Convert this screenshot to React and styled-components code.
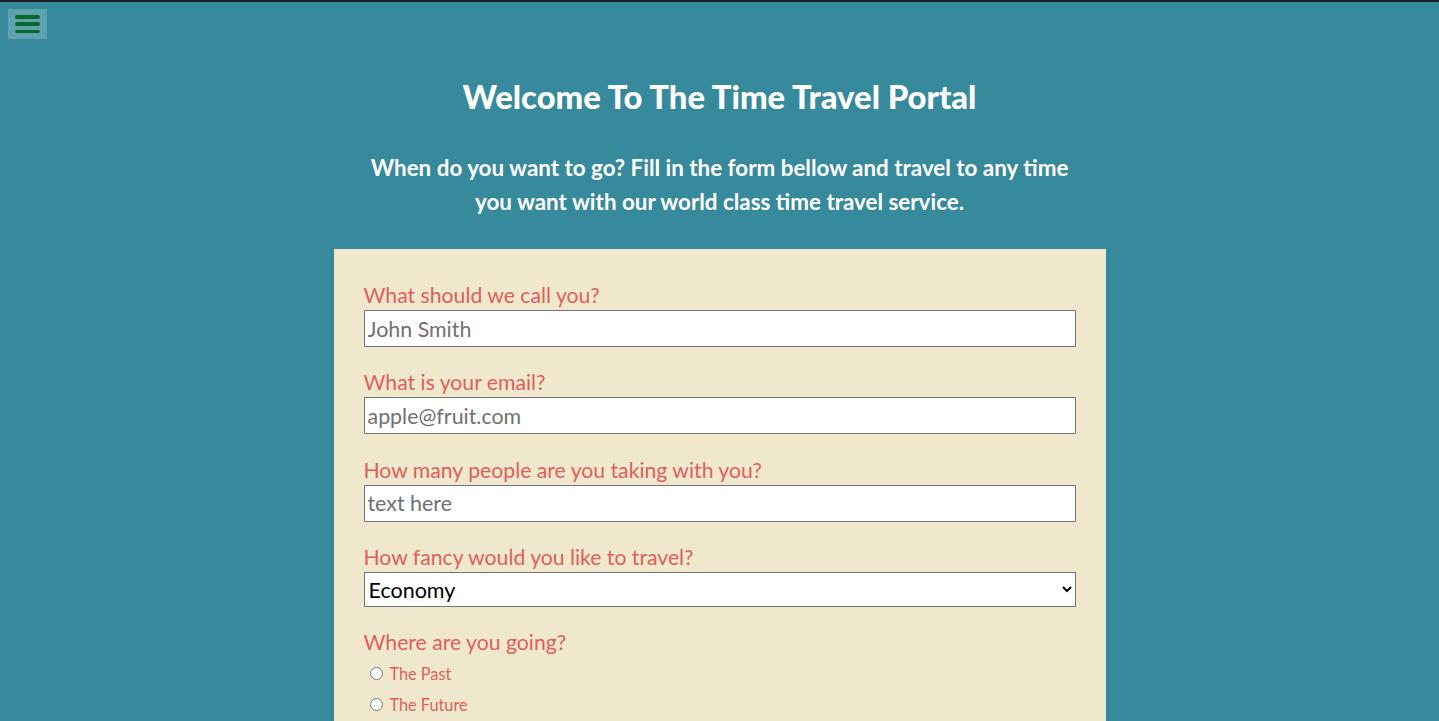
import React from "react";
import styled, { createGlobalStyle } from "styled-components";

const Global = createGlobalStyle`
  html, body { margin: 0; padding: 0; background: #378a9b; }
  body { font-family: "Lato", "Open Sans", sans-serif; border-top: 2px solid #202124; }
  * { box-sizing: border-box; }
`;

const Page = styled.div`
  position: relative;
  padding: 75px 0 0;
  min-height: 1234px;
`;

const MenuButton = styled.button`
  position: absolute;
  top: 7px;
  left: 8px;
  width: 39px;
  height: 30px;
  border: none;
  padding: 6px 7px;
  background: rgba(255, 255, 255, 0.2);
  display: flex;
  flex-direction: column;
  justify-content: space-between;
  cursor: pointer;
`;

const Bar = styled.span`
  display: block;
  height: 3.5px;
  border-radius: 2px;
  background: #096a28;
`;

const Title = styled.h1`
  margin: 0;
  text-align: center;
  color: #fff;
  font-size: 32.8px;
  line-height: 40px;
  font-weight: 900;
`;

const Intro = styled.p`
  margin: 34px auto 30px;
  max-width: 720px;
  text-align: center;
  color: #fff;
  font-size: 22.4px;
  line-height: 34px;
  font-weight: 700;
`;

const Card = styled.form`
  width: 772px;
  margin: 0 auto;
  background: #f0e8cc;
  padding: 31px 30px 60px;
  display: flex;
  flex-direction: column;
`;

const Group = styled.div`
  display: flex;
  flex-direction: column;
  margin-bottom: ${(p) => p.$gap || 20.4}px;
`;

const Label = styled.label`
  color: #df5f5c;
  font-size: 21.2px;
  line-height: 30px;
`;

const TextInput = styled.input`
  width: 100%;
  height: 37px;
  border: 1px solid #767676;
  padding: 0 3px;
  font-family: inherit;
  font-size: 21.4px;
  background: #fff;
  &::placeholder { color: #707070; }
`;

const Select = styled.select`
  width: 100%;
  height: 35px;
  border: 1px solid #767676;
  border-radius: 0;
  padding: 0;
  font-family: inherit;
  font-size: 21.5px;
  color: #000;
  background: #fff;
`;

const RadioList = styled.div`
  display: flex;
  flex-direction: column;
  margin-top: 1px;
`;

const RadioRow = styled.label`
  display: flex;
  align-items: center;
  height: 31px;
  color: #df5f5c;
  font-size: 16.3px;
  gap: 7px;
  input { margin: 0 0 0 6px; width: 13px; height: 13px; }
`;

const TextArea = styled.textarea`
  width: 100%;
  height: 120px;
  border: 1px solid #767676;
  font-family: inherit;
  font-size: 20px;
  padding: 3px;
`;

const Submit = styled.button`
  align-self: flex-start;
  padding: 10px 24px;
  font-family: inherit;
  font-size: 20px;
  font-weight: 700;
  color: #fff;
  background: #df5f5c;
  border: none;
`;

export default function App() {
  return (
    <>
      <Global />
      <Page>
        <MenuButton type="button" aria-label="menu">
          <Bar />
          <Bar />
          <Bar />
        </MenuButton>
        <Title>Welcome To The Time Travel Portal</Title>
        <Intro>
          When do you want to go? Fill in the form bellow and travel to any time
          you want with our world class time travel service.
        </Intro>
        <Card onSubmit={(e) => e.preventDefault()}>
          <Group>
            <Label>What should we call you?</Label>
            <TextInput placeholder="John Smith" />
          </Group>
          <Group>
            <Label>What is your email?</Label>
            <TextInput placeholder="apple@fruit.com" />
          </Group>
          <Group>
            <Label>How many people are you taking with you?</Label>
            <TextInput placeholder="text here" />
          </Group>
          <Group $gap={20}>
            <Label>How fancy would you like to travel?</Label>
            <Select defaultValue="economy">
              <option value="economy">Economy</option>
              <option value="business">Business</option>
              <option value="first">First Class</option>
            </Select>
          </Group>
          <Group $gap={20}>
            <Label>Where are you going?</Label>
            <RadioList>
              <RadioRow>
                <input type="radio" name="when" /> The Past
              </RadioRow>
              <RadioRow>
                <input type="radio" name="when" /> The Future
              </RadioRow>
            </RadioList>
          </Group>
          <Group>
            <Label>What year would you like to visit?</Label>
            <TextInput placeholder="1985" />
          </Group>
          <Group>
            <Label>Anything else we should know?</Label>
            <TextArea placeholder="text here" />
          </Group>
          <Submit type="submit">Travel</Submit>
        </Card>
      </Page>
    </>
  );
}
